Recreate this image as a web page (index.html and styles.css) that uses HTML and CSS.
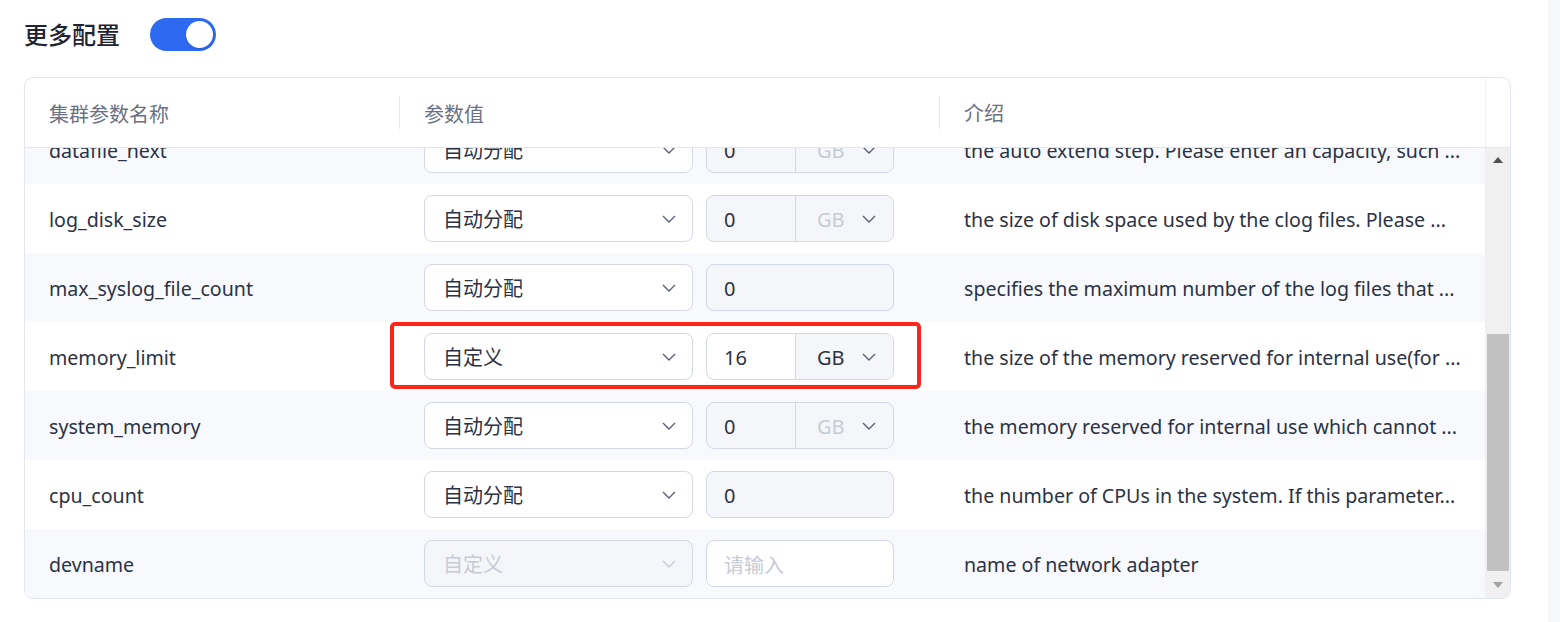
FILE: index.html
```html
<!DOCTYPE html>
<html lang="zh-CN">
    <head>
        <meta charset="UTF-8">
        <meta name="viewport" content="width=device-width, initial-scale=1.0">
        <title>更多配置</title>
        <link rel="stylesheet" href="styles.css">
    </head>
    <body>
        <div class="layout">
            <main class="main">
                <div class="title-row">
                    <h2 class="title">更多配置</h2>
                    <span class="switch on"><span class="knob"></span></span>
                </div>

                <div class="card">
                    <div class="thead">
                        <div class="th col-name">集群参数名称</div>
                        <div class="th col-value sep">参数值</div>
                        <div class="th col-desc sep">介绍</div>
                        <div class="th-gutter"></div>
                    </div>

                    <div class="tbody">
                        <div class="rows">
                            <!-- first row is scrolled half way under the header -->
                            <div class="row alt first">
                                <div class="td col-name">datafile_next</div>
                                <div class="td col-value">
                                    <div class="select"><span>自动分配</span><svg class="chev" viewBox="0 0 14 8"><polyline points="1,1 7,7 13,1"/></svg></div>
                                    <div class="group off">
                                        <span class="num">0</span>
                                        <span class="unit muted">GB<svg class="chev" viewBox="0 0 14 8"><polyline points="1,1 7,7 13,1"/></svg></span>
                                    </div>
                                </div>
                                <div class="td col-desc">the auto extend step. Please enter an capacity, such ...</div>
                            </div>
                            <div class="row">
                                <div class="td col-name">log_disk_size</div>
                                <div class="td col-value">
                                    <div class="select"><span>自动分配</span><svg class="chev" viewBox="0 0 14 8"><polyline points="1,1 7,7 13,1"/></svg></div>
                                    <div class="group off">
                                        <span class="num">0</span>
                                        <span class="unit muted">GB<svg class="chev" viewBox="0 0 14 8"><polyline points="1,1 7,7 13,1"/></svg></span>
                                    </div>
                                </div>
                                <div class="td col-desc">the size of disk space used by the clog files. Please ...</div>
                            </div>
                            <div class="row alt">
                                <div class="td col-name">max_syslog_file_count</div>
                                <div class="td col-value">
                                    <div class="select"><span>自动分配</span><svg class="chev" viewBox="0 0 14 8"><polyline points="1,1 7,7 13,1"/></svg></div>
                                    <div class="group off"><span class="num">0</span></div>
                                </div>
                                <div class="td col-desc">specifies the maximum number of the log files that ...</div>
                            </div>
                            <div class="row marked">
                                <div class="td col-name">memory_limit</div>
                                <div class="td col-value">
                                    <div class="select"><span>自定义</span><svg class="chev" viewBox="0 0 14 8"><polyline points="1,1 7,7 13,1"/></svg></div>
                                    <div class="group">
                                        <span class="num">16</span>
                                        <span class="unit">GB<svg class="chev" viewBox="0 0 14 8"><polyline points="1,1 7,7 13,1"/></svg></span>
                                    </div>
                                </div>
                                <div class="td col-desc">the size of the memory reserved for internal use(for ...</div>
                                <span class="mark"></span>
                            </div>
                            <div class="row alt">
                                <div class="td col-name">system_memory</div>
                                <div class="td col-value">
                                    <div class="select"><span>自动分配</span><svg class="chev" viewBox="0 0 14 8"><polyline points="1,1 7,7 13,1"/></svg></div>
                                    <div class="group off">
                                        <span class="num">0</span>
                                        <span class="unit muted">GB<svg class="chev" viewBox="0 0 14 8"><polyline points="1,1 7,7 13,1"/></svg></span>
                                    </div>
                                </div>
                                <div class="td col-desc">the memory reserved for internal use which cannot ...</div>
                            </div>
                            <div class="row">
                                <div class="td col-name">cpu_count</div>
                                <div class="td col-value">
                                    <div class="select"><span>自动分配</span><svg class="chev" viewBox="0 0 14 8"><polyline points="1,1 7,7 13,1"/></svg></div>
                                    <div class="group off"><span class="num">0</span></div>
                                </div>
                                <div class="td col-desc">the number of CPUs in the system. If this parameter...</div>
                            </div>
                            <div class="row alt">
                                <div class="td col-name">devname</div>
                                <div class="td col-value">
                                    <div class="select disabled"><span>自定义</span><svg class="chev" viewBox="0 0 14 8"><polyline points="1,1 7,7 13,1"/></svg></div>
                                    <div class="group"><span class="num placeholder">请输入</span></div>
                                </div>
                                <div class="td col-desc">name of network adapter</div>
                            </div>
                        </div>

                        <div class="scrollbar">
                            <span class="arrow up"></span>
                            <div class="track"><span class="thumb"></span></div>
                            <span class="arrow down"></span>
                        </div>
                    </div>
                </div>
            </main>
            <aside class="side"></aside>
        </div>
    </body>
</html>
```

FILE: styles.css
```css
*{
    box-sizing: border-box;
    font-family: "Noto Sans", "Noto Sans CJK SC", sans-serif;
}

body{
    margin: 0;
    color: #2b3244;
    font-size: 20px;
    background: #fff;
}

.layout{
    display: grid;
    grid-template-columns: 1548px 12px;
    height: 622px;
}

.side{
    background: #f7f8fc;
}

.main{
    padding: 18px 37px 0 24px;
}

.title-row{
    display: flex;
    align-items: center;
    gap: 30px;
    height: 33px;
}
.title{
    margin: 0;
    font-size: 24px;
    font-weight: 500;
    color: #1f2433;
    line-height: 33px;
}

.switch{
    display: flex;
    align-items: center;
    width: 66px;
    height: 33px;
    padding: 0 3px;
    border-radius: 17px;
    background: #c9cdd6;
}
.switch.on{
    justify-content: flex-end;
    background: #2d6af1;
}
.knob{
    width: 27px;
    height: 27px;
    border-radius: 50%;
    background: #fff;
    box-shadow: 0 1px 3px rgba(0, 0, 0, 0.15);
}

/* table */
.card{
    margin-top: 26px;
    border: 1px solid #e3e6ef;
    border-radius: 9px;
    overflow: hidden;
}

.thead{
    display: flex;
    height: 70px;
    border-bottom: 1px solid #e3e6ef;
    color: #6a7184;
}
.th{
    position: relative;
    display: flex;
    align-items: center;
    padding-top: 1px;
}
.th.sep::before{
    content: '';
    position: absolute;
    left: 0;
    top: 18px;
    height: 33px;
    border-left: 1px solid #e6e8ef;
}
.th-gutter{
    width: 25px;
    border-left: 1px solid #eef0f5;
}

.col-name{
    width: 374px;
    padding-left: 24px;
}
.col-value{
    width: 540px;
    padding-left: 25px;
}
.col-desc{
    width: 546px;
    padding: 0 24px 0 25px;
}

.tbody{
    display: flex;
    height: 450px;
    overflow: hidden;
}
.rows{
    width: 1460px;
}
.row{
    position: relative;
    display: flex;
    height: 69px;
    background: #fff;
}
.row.alt{
    background: #f8f9fc;
}
.row.first{
    margin-top: -33px;
}
.td{
    display: flex;
    align-items: center;
    white-space: nowrap;
    overflow: hidden;
    padding-top: 2px;
}
.td.col-name, .td.col-desc{
    font-size: 19.6px;
}
.col-value.td{
    gap: 13px;
    padding-top: 0;
}

/* controls */
.select{
    display: flex;
    align-items: center;
    justify-content: space-between;
    width: 269px;
    height: 47px;
    padding: 0 16px 0 18px;
    border: 1px solid #d3d8e3;
    border-radius: 8px;
    background: #fff;
}
.select.disabled{
    background: #f5f6fa;
    color: #c6cbd6;
}
.select.disabled .chev{
    stroke: #c6cbd6;
}

.chev{
    width: 14px;
    height: 8px;
    fill: none;
    stroke: #5a6174;
    stroke-width: 1.4;
}

.group{
    display: flex;
    width: 188px;
    height: 47px;
    border: 1px solid #d3d8e3;
    border-radius: 8px;
    overflow: hidden;
    background: #fff;
}
.group.off{
    background: #f5f6fa;
}
.num{
    flex: 1;
    display: flex;
    align-items: center;
    padding: 2px 0 0 17px;
}
.placeholder{
    color: #c6cbd6;
}
.unit{
    display: flex;
    align-items: center;
    justify-content: space-between;
    width: 98px;
    padding: 2px 17px 0 21px;
    border-left: 1px solid #d3d8e3;
    background: #f5f6fa;
}
.unit .chev{
    margin-top: -2px;
}
.unit.muted{
    color: #c6cbd6;
}

/* annotation box */
.mark{
    position: absolute;
    left: 365px;
    top: 0;
    width: 531px;
    height: 67px;
    border: 4px solid #ff2419;
    border-radius: 5px;
}

/* scrollbar */
.scrollbar{
    display: flex;
    flex-direction: column;
    width: 25px;
    background: #f0f0f0;
}
.arrow{
    height: 24px;
    display: flex;
    justify-content: center;
}
.arrow.up{
    align-items: center;
}
.arrow.up::before{
    content: '';
    border: 5px solid transparent;
    border-top: 0;
    border-bottom: 6px solid #505050;
}
.arrow.down::before{
    content: '';
    margin-top: 8px;
    border: 5px solid transparent;
    border-bottom: 0;
    border-top: 6px solid #a3a3a3;
}
.track{
    flex: 1;
    display: flex;
    flex-direction: column;
    justify-content: flex-end;
    padding: 0 1px 3px 2px;
}
.thumb{
    height: 237px;
    background: #c1c1c1;
}
```
